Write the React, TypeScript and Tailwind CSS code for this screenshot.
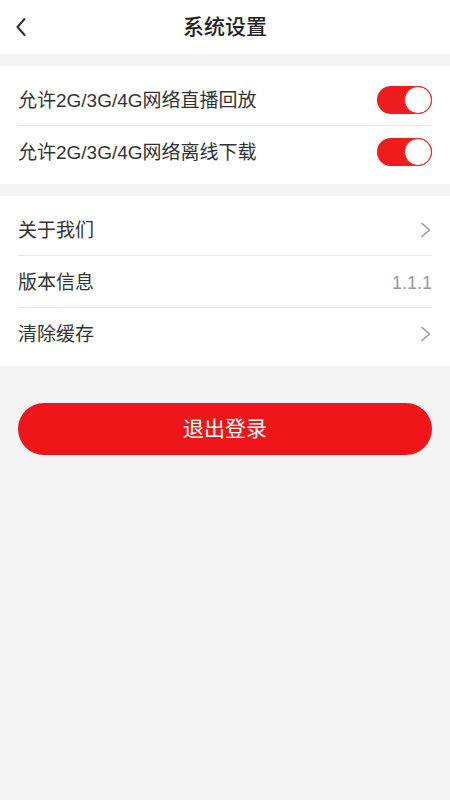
const font = { fontFamily: '"Liberation Sans", "Noto Sans CJK SC", sans-serif' };

const Toggle: React.FC = () => (
  <div className="relative h-[28px] w-[55px] rounded-full bg-[#ee1c1c]">
    <div className="absolute right-0 top-0 h-[28px] w-[28px] rounded-full border border-[#ee1c1c] bg-white" />
  </div>
);

const Chevron: React.FC = () => (
  <svg width="12" height="16" viewBox="0 0 12 16" fill="none">
    <path d="M2 1.5 L9.5 8 L2 14.5" stroke="#9a9a9a" strokeWidth="1.6" strokeLinecap="round" strokeLinejoin="round" />
  </svg>
);

const Row: React.FC<{ label: string; right: React.ReactNode; last?: boolean }> = ({ label, right, last }) => (
  <div className={`mx-[18px] flex h-[52px] items-center justify-between ${last ? "" : "border-b border-[#e6e6e6]"}`}>
    <span className="pt-[3px] text-[19px] text-[#333]">{label}</span>
    {right}
  </div>
);

export default function App() {
  return (
    <div className="flex min-h-[800px] w-full flex-col bg-[#f4f4f4]" style={font}>
      <header className="relative flex h-[54px] items-center justify-center bg-white">
        <button className="absolute left-[14px] top-[17px]">
          <svg width="16" height="20" viewBox="0 0 16 20" fill="none">
            <path d="M10.5 2 L3.5 10 L10.5 18" stroke="#333" strokeWidth="2" strokeLinecap="round" strokeLinejoin="round" />
          </svg>
        </button>
        <h1 className="text-[21px] font-medium text-[#222]">系统设置</h1>
      </header>

      <section className="mt-[12px] bg-white pb-[6px] pt-[8px]">
        <Row label="允许2G/3G/4G网络直播回放" right={<Toggle />} />
        <Row label="允许2G/3G/4G网络离线下载" right={<Toggle />} last />
      </section>

      <section className="mt-[12px] bg-white pb-[6px] pt-[8px]">
        <Row label="关于我们" right={<Chevron />} />
        <Row label="版本信息" right={<span className="pt-[3px] text-[18px] text-[#9a9a9a]">1.1.1</span>} />
        <Row label="清除缓存" right={<Chevron />} last />
      </section>

      <div className="px-[18px] pt-[37px]">
        <button className="flex h-[52px] w-full items-center justify-center rounded-full bg-[#ee1519] text-[21px] text-white">
          退出登录
        </button>
      </div>
    </div>
  );
}
